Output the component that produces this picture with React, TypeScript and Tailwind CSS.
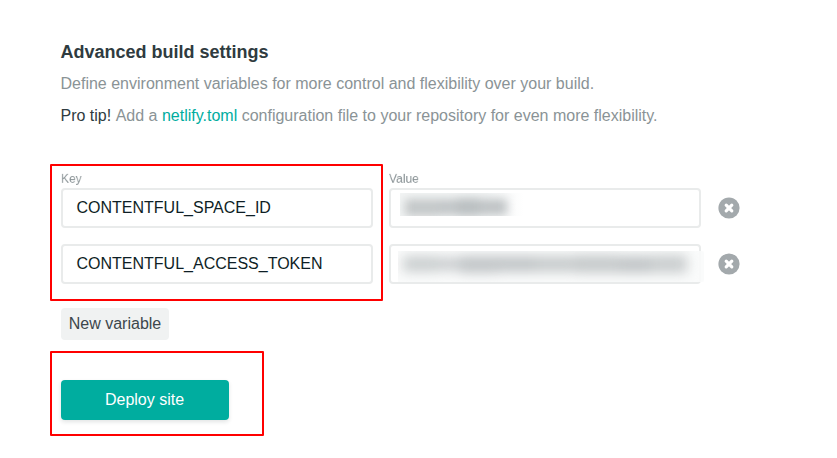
type Variable = { name: string; value: "short" | "long" };

const variables: Variable[] = [
  { name: "CONTENTFUL_SPACE_ID", value: "short" },
  { name: "CONTENTFUL_ACCESS_TOKEN", value: "long" },
];

function RemoveIcon() {
  return (
    <svg viewBox="0 0 22 22" className="block h-[22px] w-[22px]" aria-hidden="true">
      <circle cx="11" cy="11" r="10.6" fill="#a3a9ac" />
      <path d="M8.2 8.2l5.6 5.6M13.8 8.2l-5.6 5.6" stroke="#fff" strokeWidth="3.2" strokeLinecap="round" />
    </svg>
  );
}

// Smudge that covers the first, shorter value.
function ShortRedaction() {
  return (
    <div className="absolute top-[3px] left-[9px] h-[23px] w-[124px] overflow-hidden bg-linear-to-r from-[#f3f5f5] from-70% to-white">
      <div className="flex h-full items-center pt-[5px] pl-[5px] blur-[5px]">
        <span className="h-[17px] w-[34px] bg-[#c3c7c8]" />
        <span className="h-[16px] w-[18px] bg-[#c1c5c7]" />
        <span className="h-[18px] w-[22px] bg-[#babfc1]" />
        <span className="h-[16px] w-[28px] bg-[#bfc3c5]" />
      </div>
    </div>
  );
}

// Smudge that covers the second value and spills past the field's edge.
function LongRedaction() {
  return (
    <div className="absolute top-[5px] left-[7px] h-[31px] w-[306px] overflow-hidden rounded-r-[2px] bg-[#fafbfb]/90">
      <div className="flex h-full items-center pb-[5px] pl-[5px] blur-[6px]">
        <span className="h-[16px] w-[35px] bg-[#cbcfd0]" />
        <span className="h-[14px] w-[22px] bg-[#cccfd1]" />
        <span className="h-[17px] w-[38px] bg-[#c1c5c7]" />
        <span className="h-[16px] w-[38px] bg-[#c1c5c7]" />
        <span className="h-[16px] w-[39px] bg-[#c7cbcc]" />
        <span className="h-[18px] w-[44px] bg-[#c6cacb]" />
        <span className="h-[17px] w-[32px] bg-[#c1c5c7]" />
        <span className="h-[18px] w-[36px] bg-[#cacecf]" />
      </div>
    </div>
  );
}

function VariableRow({ name, value }: Variable) {
  return (
    <div className="flex items-center">
      <div className="flex h-10 w-[312px] items-center rounded-[4px] border-2 border-[#e9ebeb] bg-white pl-3.5 text-[#0e1e25]">
        {name}
      </div>
      <div className="relative ml-4 h-10 w-[312px] rounded-[4px] border-2 border-[#e9ebeb] bg-white">
        {value === "short" ? <ShortRedaction /> : <LongRedaction />}
      </div>
      <button className="ml-[17.5px]" aria-label="Remove variable">
        <RemoveIcon />
      </button>
    </div>
  );
}

export default function App() {
  return (
    <main className="relative h-[458px] w-[837px] overflow-hidden bg-white pt-10 pl-[60.5px] font-['Liberation_Sans',Arial,sans-serif] text-base leading-6 text-[#8a9396]">
      <h2 className="text-lg leading-6 font-bold text-[#2f3b40]">Advanced build settings</h2>
      <p className="mt-2">Define environment variables for more control and flexibility over your build.</p>
      <p className="mt-2">
        <span className="mr-[0.9px] text-[#2f3b40]">Pro tip!</span> Add a{" "}
        <a className="text-[#00ad9f]">netlify.toml</a> configuration file to your repository for even more
        flexibility.
      </p>

      <div className="mt-[42px] flex h-[18px]">
        <div className="w-[328px]">
          <span className="block w-fit origin-top-left scale-75 will-change-transform">Key</span>
        </div>
        <span className="block h-6 w-fit origin-top-left scale-75 will-change-transform">Value</span>
      </div>
      <div className="flex flex-col gap-4">
        {variables.map((variable) => (
          <VariableRow key={variable.name} {...variable} />
        ))}
      </div>

      <div className="mt-6 flex flex-col items-start gap-10">
        <button className="h-8 w-[108px] rounded-[4px] bg-[#f0f2f2] pl-px text-center text-[#3c474c]">New variable</button>
        <button className="h-10 w-[168px] rounded-[4px] bg-[#00ad9f] text-center text-white shadow-[0_2px_4px_rgba(14,30,37,0.12)]">
          Deploy site
        </button>
      </div>

      <div className="pointer-events-none absolute top-[164px] left-[50px] h-[137px] w-[333px] rounded-[1px] border-2 border-[#ff0000]" />
      <div className="pointer-events-none absolute top-[351px] left-[50px] h-[85px] w-[214px] rounded-[1px] border-2 border-[#ff0000]" />
    </main>
  );
}
